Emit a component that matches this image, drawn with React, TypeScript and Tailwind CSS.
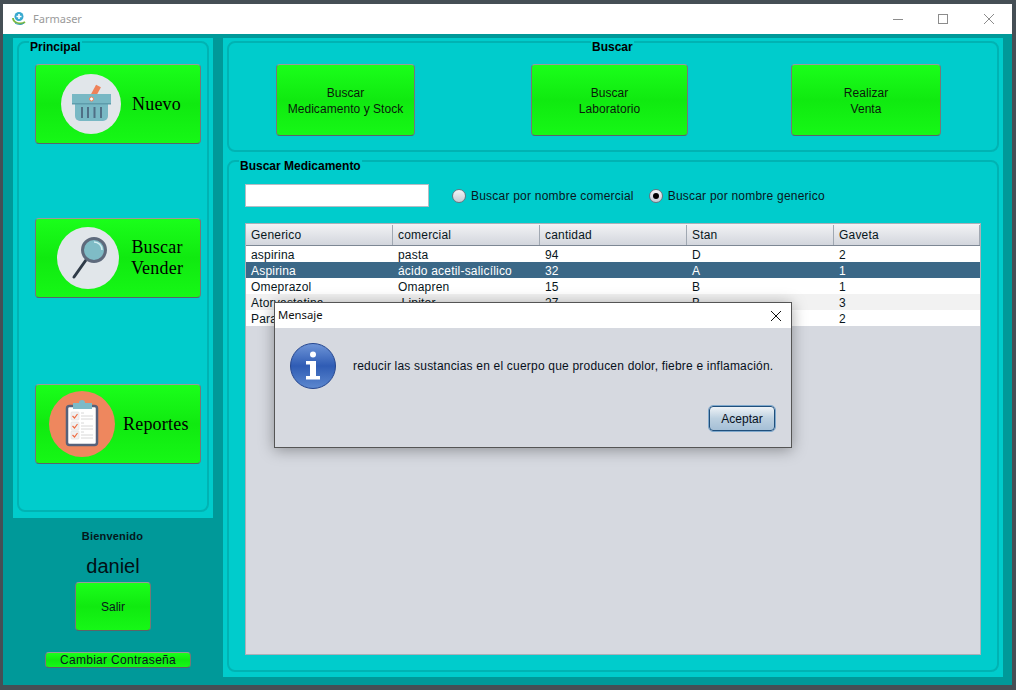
import React from 'react';

type Row = { gen: string; com: string; qty: string; stan: string; gav: string };

const cols = ['Generico', 'comercial', 'cantidad', 'Stan', 'Gaveta'];

const rows: Row[] = [
  { gen: 'aspirina', com: 'pasta', qty: '94', stan: 'D', gav: '2' },
  { gen: 'Aspirina', com: 'ácido acetil-salicílico', qty: '32', stan: 'A', gav: '1' },
  { gen: 'Omeprazol', com: 'Omapren', qty: '15', stan: 'B', gav: '1' },
  { gen: 'Atorvastatina', com: '\u00a0Lipitor', qty: '27', stan: 'B', gav: '3' },
  { gen: 'Paracetamol', com: 'Tempra', qty: '40', stan: 'C', gav: '2' },
];

const green =
  'bg-gradient-to-b from-[#1aff1a] via-[#10ea10] to-[#16f816] border border-t-[#9a9a9a] border-x-[#777] border-b-[#5a6468] rounded-[4px]';

function Basket() {
  return (
    <svg width="60" height="60" viewBox="0 0 60 60">
      <circle cx="30" cy="30" r="30" fill="#e1e6ea" />
      <path d="M31 24L37.5 12" stroke="#ee8259" strokeWidth="5.5" />
      <rect x="11" y="20" width="39" height="10" fill="#78b8c4" />
      <path d="M14 30h33v12a5 5 0 0 1-5 5H19a5 5 0 0 1-5-5z" fill="#78b8c4" />
      <rect x="11" y="29" width="39" height="1.5" fill="#5e9cab" />
      <circle cx="30.5" cy="25" r="2" fill="#fff" stroke="#ee8259" />
      <path d="M21 33v11M27 33v11M33.500 33v11M40 33v11" stroke="#4f6f85" strokeWidth="2" />
    </svg>
  );
}

function Magnifier() {
  return (
    <svg width="62" height="62" viewBox="0 0 62 62">
      <circle cx="31" cy="31" r="31" fill="#e1e6ea" />
      <path d="M29 33 L17 50" stroke="#2f3b48" strokeWidth="3" strokeLinecap="round" />
      <circle cx="37" cy="23" r="11.5" fill="#7fbcc6" stroke="#5e6a7c" strokeWidth="3" />
      <path d="M37 15a8 8 0 0 1 8 8" fill="none" stroke="#d3eef2" strokeWidth="1.5" />
    </svg>
  );
}

function Clipboard() {
  const ys = [21, 31, 40];
  return (
    <svg width="66" height="66" viewBox="0 0 66 66">
      <circle cx="33" cy="33" r="33" fill="#ee875e" />
      <rect x="18" y="15" width="30" height="39" rx="2.500" fill="#fff" stroke="#56617a" strokeWidth="2.500" />
      <path d="M24 18v-6h6a3 3 0 0 1 6 0h7v6z" fill="#7cbac8" />
      {ys.map((y) => (
        <g key={y}>
          <rect x="22" y={y} width="8" height="8" rx="1" fill="#f1f1f1" stroke="#ddd" strokeWidth="0.6" />
          <path d={`M23.500 ${y + 4}l2 2 3-4`} fill="none" stroke="#ee6e45" strokeWidth="1.2" />
          <path d={`M32 ${y + 1}h3M32 ${y + 4}h12M32 ${y + 7}h12`} stroke="#d8d8d8" strokeWidth="1" />
        </g>
      ))}
    </svg>
  );
}

function InfoIcon() {
  return (
    <svg width="46" height="46" viewBox="0 0 46 46">
      <defs>
        <linearGradient id="info" x1="0" y1="0" x2="0" y2="1">
          <stop offset="0" stopColor="#6f95d8" />
          <stop offset="0.5" stopColor="#2f5cb4" />
          <stop offset="1" stopColor="#5d88cf" />
        </linearGradient>
      </defs>
      <circle cx="23" cy="23" r="22.500" fill="url(#info)" stroke="#26478f" />
      <circle cx="23" cy="11.500" r="3" fill="#fff" />
      <path d="M16 18h10v15h4v3.500H16V33h4V21.500h-4z" fill="#fff" />
    </svg>
  );
}

function AppLogo() {
  return (
    <svg width="14" height="15" viewBox="0 0 14 15">
      <circle cx="7" cy="5.500" r="4.500" fill="#38a9cf" />
      <path d="M7 3v5M4.500 5.500h5" stroke="#fff" strokeWidth="1.600" />
      <path d="M1 7c0 5 8 7 12 4" fill="none" stroke="#79b83c" strokeWidth="1.800" />
      <path d="M3 12c3 2 7 2 9 0" fill="none" stroke="#3b9fb5" strokeWidth="1" />
    </svg>
  );
}

function BigButton({ icon, children, iconClass, textClass }: { icon: React.ReactNode; children: React.ReactNode; iconClass: string; textClass: string }) {
  return (
    <div className={`${green} w-[166px] h-[80px] flex items-center shrink-0`}>
      <div className={`${iconClass} shrink-0 flex`}>{icon}</div>
      <div className={`${textClass} font-['Liberation_Serif',serif] text-[18px] leading-[21px] text-center text-black tracking-[0.2px]`}>{children}</div>
    </div>
  );
}

function TopButton({ w, a, b }: { w: string; a: string; b: string }) {
  return (
    <div className={`${green} ${w} h-[72px] pt-[1px] flex flex-col items-center justify-center text-[12px] leading-[16px] text-[#0a1a0a] tracking-[0.05px]`}>
      <span>{a}</span>
      <span>{b}</span>
    </div>
  );
}

function Radio({ on, label }: { on?: boolean; label: string }) {
  return (
    <div className="flex items-center gap-[5px]">
      <span className="w-[14px] h-[14px] rounded-full border border-[#6a7480] bg-gradient-to-b from-[#f4f5f7] to-[#c6ccd4] flex items-center justify-center">
        {on && <span className="w-[6px] h-[6px] rounded-full bg-black" />}
      </span>
      <span className="text-[12px] tracking-[0.22px] text-[#08161c]">{label}</span>
    </div>
  );
}

function Titled({ title, className, labelClass, children }: { title: string; className: string; labelClass: string; children: React.ReactNode }) {
  return (
    <div className={`relative border-2 border-[#00b3b3] rounded-[8px] ${className}`}>
      <span className={`absolute -top-[3px] bg-[#00cccc] text-[12px] leading-[14px] font-bold text-black px-[1px] ${labelClass}`}>{title}</span>
      {children}
    </div>
  );
}

export default function App() {
  return (
    <div className="relative w-[1016px] h-[690px] bg-[#454f55] pt-[4px] pl-[3px] pr-[4px] pb-[5px] flex flex-col font-['Liberation_Sans',sans-serif] overflow-hidden">
      {/* title bar */}
      <div className="h-[30px] bg-white flex items-center shrink-0">
        <div className="ml-[9px] -mt-[1px] flex"><AppLogo /></div>
        <span className="ml-[7px] font-['Noto_Sans',sans-serif] text-[11px] text-[#9a9a9a]">Farmaser</span>
        <div className="ml-auto flex items-center text-[#8c8c8c]">
          <svg width="12" height="12" viewBox="0 0 12 12" className="mr-[33px]"><path d="M1 6.500h10" stroke="currentColor" /></svg>
          <svg width="12" height="12" viewBox="0 0 12 12" className="mr-[34px]"><rect x="1.500" y="1.500" width="9" height="9" fill="none" stroke="currentColor" /></svg>
          <svg width="12" height="12" viewBox="0 0 12 12" className="mr-[17px]"><path d="M1 1l10 10M11 1L1 11" stroke="currentColor" /></svg>
        </div>
      </div>

      <div className="flex-1 bg-[#009999] flex pt-[4px] pl-[10px]">
        {/* left column */}
        <div className="w-[200px] shrink-0 flex flex-col">
          <div className="h-[480px] bg-[#00cccc] pt-[3px] pb-[6px] px-[4px]">
            <Titled title="Principal" className="h-full flex flex-col items-start pl-[16px] pt-[21px]" labelClass="left-[10px]">
              <BigButton icon={<Basket />} iconClass="ml-[25px] mr-[11px]" textClass="">Nuevo</BigButton>
              <div className="h-[74px] shrink-0" />
              <BigButton icon={<Magnifier />} iconClass="ml-[21px] mr-[10px] -mt-[1px]" textClass="w-[56px]">
                Buscar<br />Vender
              </BigButton>
              <div className="h-[86px] shrink-0" />
              <BigButton icon={<Clipboard />} iconClass="ml-[13px] mr-[8px] -mt-[1px]" textClass="">Reportes</BigButton>
            </Titled>
          </div>
          <div className="flex flex-col items-center w-[200px] pt-[12px]">
            <span className="text-[11px] leading-[13px] font-bold text-[#04181c] tracking-[0.2px] -ml-[1px]">Bienvenido</span>
            <span className="text-[20px] leading-[23px] text-[#021015] mt-[12px]">daniel</span>
            <div className={`${green} w-[76px] h-[49px] mt-[4px] flex items-center justify-center text-[12px] text-[#08161c]`}>Salir</div>
            <div className={`${green} w-[146px] h-[16px] mt-[21px] ml-[10px] flex items-center justify-center text-[12px] text-[#08161c] tracking-[0.3px]`}>Cambiar Contraseña</div>
          </div>
        </div>

        {/* right column */}
        <div className="w-[780px] h-[639px] ml-[10px] bg-[#00cccc] pt-[3px] px-[4px] flex flex-col">
          <Titled title="Buscar" className="h-[111px] shrink-0 flex items-start pt-[21px] pl-[47px]" labelClass="left-[362px]">
            <TopButton w="w-[139px]" a="Buscar" b="Medicamento y Stock" />
            <div className="w-[116px] shrink-0" />
            <TopButton w="w-[157px]" a="Buscar" b="Laboratorio" />
            <div className="w-[103px] shrink-0" />
            <TopButton w="w-[150px]" a="Realizar" b="Venta" />
          </Titled>
          <Titled title="Buscar Medicamento" className="h-[512px] mt-[8px] shrink-0 pl-[16px] pt-[22px] flex flex-col" labelClass="left-[10px]">
            <div className="flex items-center h-[23px]">
              <div className="w-[184px] h-[23px] bg-white border border-[#b5bcc4]" />
              <div className="ml-[23px]"><Radio label="Buscar por nombre comercial" /></div>
              <div className="ml-[15px]"><Radio on label="Buscar por nombre generico" /></div>
            </div>
            <div className="mt-[16px] w-[736px] h-[432px] bg-[#d6d9e0] border border-[#aab0b8] flex flex-col text-[12px] tracking-[0.2px] text-[#08161c]">
              <div className="h-[22px] pt-[1px] grid grid-cols-[147px_147px_147px_147px_146px] bg-gradient-to-b from-[#f2f3f5] to-[#d3d6dd] border-b border-[#7d8794]">
                {cols.map((c) => (
                  <div key={c} className="pl-[5px] flex items-center border-r border-[#a0a8b2]">{c}</div>
                ))}
              </div>
              {rows.map((r, i) => (
                <div
                  key={r.gen}
                  className={`h-[16px] leading-[18px] grid grid-cols-[147px_147px_147px_147px_146px] ${i === 1 ? 'bg-[#3b6887] text-white' : i === 3 ? 'bg-[#f2f2f2]' : 'bg-white'}`}
                >
                  <span className="pl-[5px]">{r.gen}</span>
                  <span className="pl-[5px]">{r.com}</span>
                  <span className="pl-[5px]">{r.qty}</span>
                  <span className="pl-[5px]">{r.stan}</span>
                  <span className="pl-[5px]">{r.gav}</span>
                </div>
              ))}
            </div>
          </Titled>
        </div>
      </div>

      {/* message dialog */}
      <div className="absolute left-[274px] top-[302px] w-[518px] h-[146px] bg-[#d6d9e0] border border-[#555] shadow-[0_2px_14px_rgba(0,0,0,0.35)] flex flex-col">
        <div className="h-[25px] bg-white flex items-center justify-between shrink-0">
          <span className="ml-[3px] font-['Noto_Sans',sans-serif] text-[11.3px] text-[#111]">Mensaje</span>
          <svg width="12" height="12" viewBox="0 0 12 12" className="mr-[9px]"><path d="M1 1l10 10M11 1L1 11" stroke="#111" /></svg>
        </div>
        <div className="flex items-start pl-[15px] pt-[15px]">
          <InfoIcon />
          <span className="ml-[17px] mt-[16px] text-[12px] leading-[14px] tracking-[0.2px] text-[#08101c] whitespace-nowrap">
            reducir las sustancias en el cuerpo que producen dolor, fiebre e inflamación.
          </span>
        </div>
        <div className="flex justify-end pr-[16px] mt-[17px]">
          <div className="w-[66px] h-[25px] rounded-[4px] border border-[#1f4f7c] outline outline-1 outline-[#7fa8cc] bg-gradient-to-b from-[#eef2f6] via-[#bcd0e0] to-[#a5bfd6] flex items-center justify-center text-[12px] text-[#08101c]">
            Aceptar
          </div>
        </div>
      </div>
    </div>
  );
}
